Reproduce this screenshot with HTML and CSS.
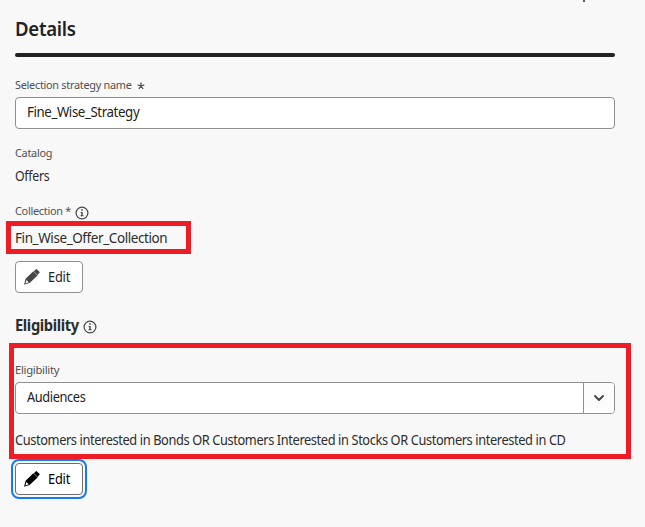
FILE: index.html
```
<!DOCTYPE html>
<html lang="en">
<head>
<meta charset="utf-8">
<title>Details</title>
<link rel="stylesheet" href="styles.css">
</head>
<body>
<main class="panel">
  <span class="clipped-text"></span>
  <h1 class="title"><span>Details</span></h1>
  <hr class="divider">
  <label class="label label-name"><span>Selection strategy name</span>
    <svg class="star" viewBox="0 0 8 8"><path d="M4 4V.5M4 4L.7 2.9M4 4l3.3-1.1M4 4L1.9 7M4 4l2.1 3"/></svg>
  </label>
  <div class="input"><span class="t-name">Fine_Wise_Strategy</span></div>
  <div class="label label-catalog"><span>Catalog</span></div>
  <div class="value value-catalog"><span>Offers</span></div>
  <div class="label label-collection"><span>Collection *</span>
    <svg class="info" viewBox="0 0 14 14"><circle cx="7" cy="7" r="5.9"/><path class="dot" d="M6.2 3.2h1.6v1.6H6.2zM5.6 5.9h2.1v3.3h.8v1h-3v-1h.8V6.9h-.7z"/></svg>
  </div>
  <div class="value value-collection"><span class="t-collection">Fin_Wise_Offer_Collection</span><i class="mark mark-collection"></i></div>
  <button class="button"><svg class="pencil" viewBox="0 0 16 16"><path d="M9.8 2.2 12 .3q.5-.4 1 .1l2.4 2.3q.5.5.1 1l-2 2.2z"/><path fill-rule="evenodd" d="M9.3 2.2 13.6 6.4 5.6 14 .7 15.6q-.7.2-.5-.5L1.6 9.8zM2.5 11 1.4 14.4 4.7 13.3z"/></svg><span>Edit</span></button>
  <h2 class="subtitle"><span>Eligibility</span>
    <svg class="info" viewBox="0 0 14 14"><circle cx="7" cy="7" r="5.9"/><path class="dot" d="M6.2 3.2h1.6v1.6H6.2zM5.6 5.9h2.1v3.3h.8v1h-3v-1h.8V6.9h-.7z"/></svg>
  </h2>
  <section class="eligibility">
    <div class="label label-eligibility"><span>Eligibility</span></div>
    <div class="select"><span class="t-audiences">Audiences</span><span class="select-toggle"><svg viewBox="0 0 12 8"><path d="M2 2l4 4 4-4"/></svg></span></div>
    <p class="rule"><span>Customers interested in Bonds OR Customers Interested in Stocks OR Customers interested in CD</span></p>
    <i class="mark mark-eligibility"></i>
  </section>
  <button class="button focused"><svg class="pencil" viewBox="0 0 16 16"><path d="M9.8 2.2 12 .3q.5-.4 1 .1l2.4 2.3q.5.5.1 1l-2 2.2z"/><path fill-rule="evenodd" d="M9.3 2.2 13.6 6.4 5.6 14 .7 15.6q-.7.2-.5-.5L1.6 9.8zM2.5 11 1.4 14.4 4.7 13.3z"/></svg><span>Edit</span></button>
</main>
</body>
</html>
```
FILE: styles.css
```
* { box-sizing: border-box; }
body {
  margin: 0;
  background: #f8f8f8;
  color: #2c2c2c;
  font-family: "Noto Sans", "Open Sans", sans-serif;
  font-size: 13.5px;
  overflow: hidden;
}
.panel {
  position: relative;
  display: flex;
  flex-direction: column;
  align-items: flex-start;
  width: 615px;
  height: 527px;
  padding-left: 15px;
}
.panel span { white-space: nowrap; }

/* Condensed letterforms */
.title span, .label span, .value span, .subtitle span, .rule span, .button span, .t-name, .t-audiences {
  display: inline-block;
  transform: scaleX(0.947);
  transform-origin: 0 50%;
}
.title span { transform: scaleX(0.93); }
.value-catalog span { transform: scaleX(0.915); }
.panel .t-name { transform: scaleX(0.983); }
.panel .t-collection { transform: scaleX(0.998); }
.subtitle span { transform: scaleX(0.95); width: 64px; }
.label-eligibility span { transform: scaleX(0.98); }
.label-name span { width: 117px; }
.label-collection span { width: 57px; }

.clipped-text {
  position: absolute;
  top: 0;
  left: 583px;
  width: 2px;
  height: 2px;
  background: #555;
}
.title {
  margin: 14px 0 0;
  height: 30px;
  line-height: 30px;
  font-size: 20px;
  font-weight: 600;
  letter-spacing: -0.3px;
  color: #222;
}
.divider {
  width: 600px;
  height: 4px;
  margin: 9px 0 0;
  border: 0;
  border-radius: 2px;
  background: #222;
}
.label {
  display: flex;
  align-items: center;
  height: 18px;
  line-height: 18px;
  font-size: 11.5px;
  letter-spacing: -0.3px;
  color: #505050;
}
.label-name { margin-top: 19px; }
.star {
  width: 8px;
  height: 8px;
  margin: 1px 0 0 5px;
  fill: none;
  stroke: #505050;
  stroke-width: 1.3;
}
.input, .select {
  display: flex;
  align-items: center;
  width: 600px;
  height: 32px;
  border: 1px solid #909090;
  border-radius: 4px;
  background: #fff;
  padding-left: 11px;
  color: #222;
}
.input { margin-top: 3px; padding-bottom: 2px; }
.value { position: relative; height: 20px; line-height: 20px; }
.label-catalog { margin-top: 15px; }
.value-catalog { margin-top: 4px; letter-spacing: -0.3px; }
.label-collection { margin-top: 16px; }
.value-collection { margin-top: 8px; }
.t-name, .t-collection, .t-audiences { letter-spacing: -0.4px; }
.info {
  width: 14px;
  height: 14px;
  fill: none;
  stroke: #464646;
  stroke-width: 1.2;
}
.info .dot { fill: #464646; stroke: none; }
.label .info { margin: 3px 0 0 3px; }
.button {
  display: flex;
  align-items: center;
  width: 68px;
  height: 32px;
  margin: 13px 0 0;
  padding: 0 0 0 8px;
  border: 1px solid #909090;
  border-radius: 4px;
  background: #fff;
  color: #222;
  font: inherit;
  letter-spacing: -0.2px;
}
.pencil {
  width: 16px;
  height: 16px;
  margin-right: 8px;
  fill: #464646;
}
.subtitle {
  display: flex;
  align-items: center;
  height: 24px;
  margin: 20px 0 1px;
  line-height: 24px;
  font-size: 15.5px;
  font-weight: 700;
  letter-spacing: -0.4px;
}
.subtitle .info { margin: 3px 0 0 4px; }
.eligibility { position: relative; margin-top: 23px; }
.select { margin-top: 3px; }
.t-audiences { margin-bottom: 2px; }
.select-toggle {
  display: flex;
  align-items: center;
  justify-content: center;
  width: 31px;
  height: 30px;
  margin-left: auto;
  border-left: 1px solid #909090;
  background: #fcfcfc;
  border-radius: 0 3px 3px 0;
}
.select-toggle svg {
  width: 12px;
  height: 8px;
  fill: none;
  stroke: #464646;
  stroke-width: 2;
  stroke-linecap: round;
  stroke-linejoin: round;
}
.rule {
  width: 600px;
  height: 20px;
  margin: 16px 0 0;
  line-height: 20px;
  letter-spacing: -0.4px;
}
.mark {
  position: absolute;
  border: 5px solid #ee1c25;
  pointer-events: none;
}
.mark-collection { top: -7px; left: -9px; width: 185px; height: 33px; }
.mark-eligibility { top: -18px; left: -6px; width: 622px; height: 116px; }
.focused {
  border-color: #6d6d6d;
  outline: 2px solid #147af3;
  outline-offset: 2px;
  color: #000;
}
.focused .pencil { fill: #000; }
```
